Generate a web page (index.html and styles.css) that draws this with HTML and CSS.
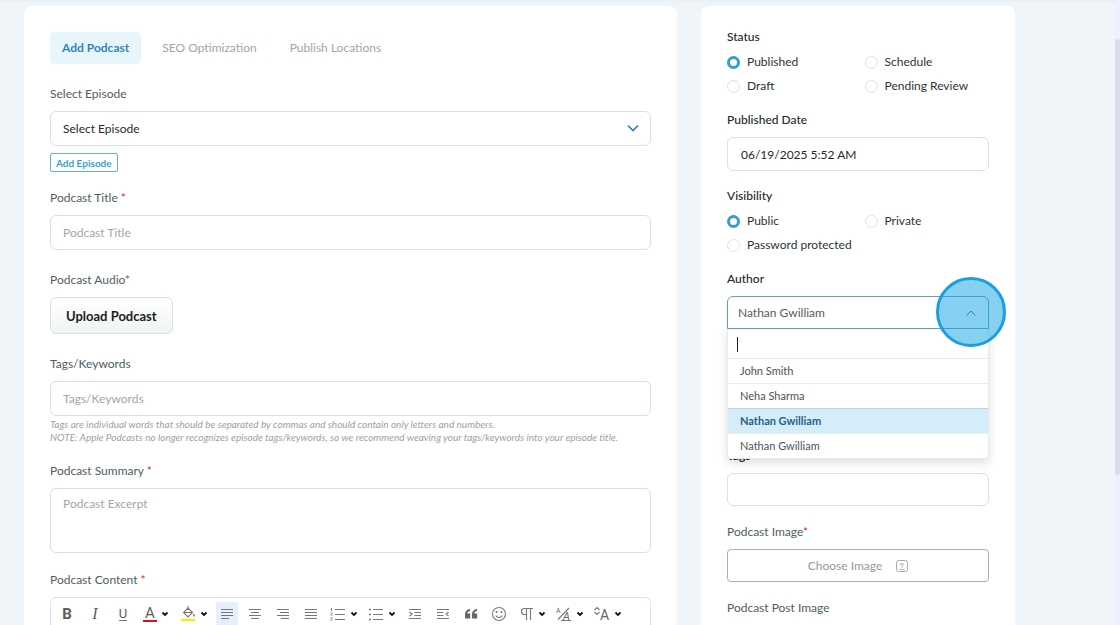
FILE: index.html
```
<!DOCTYPE html>
<html lang="en">
<head>
  <meta charset="UTF-8" />
  <meta name="viewport" content="width=device-width, initial-scale=1.0"/>
  <title>Add Podcast</title>
  <link rel="stylesheet" href="styles.css">
</head>
<body>
  <div class="page">
    <main class="card">
      <nav class="tabs">
        <button class="tab active" type="button">Add Podcast</button>
        <button class="tab" type="button">SEO Optimization</button>
        <button class="tab" type="button">Publish Locations</button>
      </nav>

      <div class="field episode-field">
        <label for="episode">Select Episode</label>
        <div class="select-wrap">
          <select class="control" id="episode">
            <option>Select Episode</option>
          </select>
          <svg class="chevron" width="12" height="8" viewBox="0 0 12 8"><path d="M1 1.5l5 5 5-5" fill="none" stroke="#2f80b5" stroke-width="1.6"/></svg>
        </div>
        <button class="add-episode" type="button">Add Episode</button>
      </div>

      <div class="field title-field">
        <label for="title">Podcast Title <span class="req">*</span></label>
        <input class="control" type="text" id="title" placeholder="Podcast Title" />
      </div>

      <div class="field title-field">
        <label for="upload">Podcast Audio<span class="req">*</span></label>
        <button class="upload" type="button" id="upload">Upload Podcast</button>
      </div>

      <div class="field">
        <label for="keywords">Tags/Keywords</label>
        <input class="control" type="text" id="keywords" placeholder="Tags/Keywords" />
        <p class="hint">Tags are individual words that should be separated by commas and should contain only letters and numbers.<br>NOTE: Apple Podcasts no longer recognizes episode tags/keywords, so we recommend weaving your tags/keywords into your episode title.</p>
      </div>

      <div class="field">
        <label for="summary">Podcast Summary <span class="req">*</span></label>
        <textarea class="control" id="summary" placeholder="Podcast Excerpt"></textarea>
      </div>

      <div class="field">
        <label for="content">Podcast Content <span class="req">*</span></label>
        <div class="editor">
          <div class="toolbar">
            <button class="tool" type="button" aria-label="Bold"><b>B</b></button>
            <button class="tool" type="button" aria-label="Italic"><i class="serif">I</i></button>
            <button class="tool" type="button" aria-label="Underline"><span class="underline">U</span></button>
            <button class="tool drop" type="button" aria-label="Text color">
              <span class="text-color">A</span>
              <svg class="caret" viewBox="0 0 8 6"><path d="M1.5 1.5L4 4l2.5-2.5"/></svg>
            </button>
            <button class="tool drop" type="button" aria-label="Fill color">
              <svg class="icon" viewBox="0 0 16 16"><path d="M8 0v4M8 2l4.500 4.500L8 11 3.500 6.500z"/><path d="M3.500 6.500h9"/><path d="M14 8v2.500" stroke-width="1.500"/><path d="M1 14h14" stroke="#f2ea1a" stroke-width="2.500"/></svg>
              <svg class="caret" viewBox="0 0 8 6"><path d="M1.5 1.5L4 4l2.5-2.5"/></svg>
            </button>
            <button class="tool active" type="button" aria-label="Align left"><svg class="icon" viewBox="0 0 16 16"><path d="M2 3.500h12M2 6.500h12M2 9.500h12M2 12.500h8"/></svg></button>
            <button class="tool" type="button" aria-label="Align center"><svg class="icon" viewBox="0 0 16 16"><path d="M2 3.500h12M4 6.500h8M2 9.500h12M4 12.500h8"/></svg></button>
            <button class="tool" type="button" aria-label="Align right"><svg class="icon" viewBox="0 0 16 16"><path d="M2 3.500h12M5 6.500h9M2 9.500h12M6 12.500h8"/></svg></button>
            <button class="tool" type="button" aria-label="Justify"><svg class="icon" viewBox="0 0 16 16"><path d="M2 3.500h12M2 6.500h12M2 9.500h12M2 12.500h12"/></svg></button>
            <button class="tool drop" type="button" aria-label="Numbered list">
              <svg class="icon" viewBox="0 0 16 16"><path d="M5 3.500h10M5 8.500h10M5 13.500h10"/><path d="M1.500 2v3M.5 7h2M.5 9h2M.5 12h2M.5 14h2" stroke-width="1"/></svg>
              <svg class="caret" viewBox="0 0 8 6"><path d="M1.5 1.5L4 4l2.5-2.5"/></svg>
            </button>
            <button class="tool drop" type="button" aria-label="Bulleted list">
              <svg class="icon" viewBox="0 0 16 16"><path d="M5 3.500h10M5 8.500h10M5 13.500h10"/><path d="M1 3.500h2M1 8.500h2M1 13.500h2" stroke-width="1.500"/></svg>
              <svg class="caret" viewBox="0 0 8 6"><path d="M1.5 1.5L4 4l2.5-2.5"/></svg>
            </button>
            <button class="tool" type="button" aria-label="Indent"><svg class="icon" viewBox="0 0 16 16"><path d="M2 3.500h12M7.500 6.500H14M7.500 9.500H14M2 12.500h12M2.500 6L5 8l-2.500 2"/></svg></button>
            <button class="tool" type="button" aria-label="Outdent"><svg class="icon" viewBox="0 0 16 16"><path d="M2 3.500h12M2 6.500h6.500M2 9.500h6.500M2 12.500h12M13.500 6L11 8l2.500 2"/></svg></button>
            <button class="tool" type="button" aria-label="Quote"><svg class="icon" viewBox="0 0 16 16"><path d="M7 3C3.500 3.300 2 5.800 2 9v3.500h5.200V7.500H4.300C4.500 6.200 5.400 5.200 7 5zM14 3c-3.500.3-5 2.800-5 6v3.500h5.200v-5h-2.900c.2-1.300 1.100-2.300 2.700-2.500z" fill="#666" stroke="none"/></svg></button>
            <button class="tool" type="button" aria-label="Emoji"><svg class="icon" viewBox="0 0 16 16"><circle cx="8" cy="8" r="6.500"/><path d="M4.800 9.500c1.200 2.600 5.200 2.600 6.400 0"/><path d="M5.500 5v2M10.500 5v2" stroke-width="1.500"/></svg></button>
            <button class="tool drop" type="button" aria-label="Paragraph format">
              <svg class="icon" viewBox="0 0 16 16"><path d="M15 2.500H6.500a3 3 0 0 0 0 6h2M8.500 2.500V14M12.500 2.500V14"/></svg>
              <svg class="caret" viewBox="0 0 8 6"><path d="M1.5 1.5L4 4l2.5-2.5"/></svg>
            </button>
            <button class="tool drop" type="button" aria-label="Inline style">
              <svg class="icon" viewBox="0 0 16 16"><text x="0" y="7" font-size="7">A</text><text x="7" y="14" font-size="11" font-style="italic">A</text><path d="M2 13.500L13 2M5 14.500h10"/></svg>
              <svg class="caret" viewBox="0 0 8 6"><path d="M1.5 1.5L4 4l2.5-2.5"/></svg>
            </button>
            <button class="tool drop" type="button" aria-label="Font size">
              <svg class="icon" viewBox="0 0 16 16"><path d="M.5 4L3 1.500 5.500 4M.5 6L3 8.500 5.500 6"/><text x="6" y="14" font-size="14">A</text></svg>
              <svg class="caret" viewBox="0 0 8 6"><path d="M1.5 1.5L4 4l2.5-2.5"/></svg>
            </button>
          </div>
          <textarea class="editor-body" id="content"></textarea>
        </div>
      </div>
    </main>

    <aside class="card">
      <fieldset class="group">
        <legend>Status</legend>
        <div class="radios">
          <label><input type="radio" name="status" checked />Published</label>
          <label><input type="radio" name="status" />Schedule</label>
          <label><input type="radio" name="status" />Draft</label>
          <label><input type="radio" name="status" />Pending Review</label>
        </div>
      </fieldset>

      <div class="group">
        <label class="strong" for="date">Published Date</label>
        <input class="control date" type="text" id="date" value="06/19/2025 5:52 AM" />
      </div>

      <fieldset class="group">
        <legend>Visibility</legend>
        <div class="radios">
          <label><input type="radio" name="visibility" checked />Public</label>
          <label><input type="radio" name="visibility" />Private</label>
          <label class="wide"><input type="radio" name="visibility" />Password protected</label>
        </div>
      </fieldset>

      <div class="group author-group">
        <label class="strong" for="author">Author</label>
        <div class="select-wrap">
          <select class="control author" id="author">
            <option>John Smith</option>
            <option>Neha Sharma</option>
            <option selected>Nathan Gwilliam</option>
          </select>
          <svg class="chevron" width="12" height="8" viewBox="0 0 12 8"><path d="M1.500 6.500L6 2l4.500 4.500" fill="none" stroke="#35637c" stroke-width="1"/></svg>
          <div class="dropdown">
            <input class="search" type="text" aria-label="Search authors" />
            <ul role="listbox" aria-label="Authors">
              <li role="option">John Smith</li>
              <li role="option">Neha Sharma</li>
              <li role="option" aria-selected="true" class="selected">Nathan Gwilliam</li>
              <li role="option">Nathan Gwilliam</li>
            </ul>
          </div>
          <span class="click-marker"></span>
        </div>
      </div>

      <div class="field">
        <label class="strong tags-label" for="tags">Tags</label>
        <input class="control short" type="text" id="tags" />
      </div>

      <div class="field">
        <label for="image">Podcast Image<span class="req">*</span></label>
        <button class="choose" type="button" id="image">Choose Image
          <svg width="12" height="12" viewBox="0 0 12 12" fill="none" stroke="#aaa"><rect x=".5" y=".5" width="11" height="11" rx="2"/><path d="M6 8V3M4 5l2-2 2 2M3 9.500h6" stroke-width=".8"/></svg>
        </button>
      </div>

      <div class="field">
        <label for="post-image">Podcast Post Image</label>
        <input type="file" id="post-image" hidden />
      </div>
    </aside>
  </div>
  <div class="scrollbar"><div class="thumb"></div></div>
</body>
</html>
```
FILE: styles.css
```
* {
  box-sizing: border-box;
}

body {
  display: flex;
  height: 100vh;
  margin: 0;
  overflow: hidden;
  background: #f0f5f9;
  color: #2c3437;
  font-family: Lato, sans-serif;
  font-size: 12px;
  line-height: 18px;
}

button, input, select, textarea {
  font: inherit;
  color: inherit;
  margin: 0;
}

button {
  cursor: pointer;
}

.page {
  flex: 1;
  display: grid;
  grid-template-columns: 1fr 314px;
  gap: 24px;
  padding: 6px 100px 0 24px;
  box-shadow: inset 0 3px 2px -1px #e8f0f4;
}

.card {
  background: #fff;
  border-radius: 8px;
  padding: 26px;
  min-width: 0;
}

aside.card {
  padding-top: 22px;
}

.tabs {
  display: flex;
  gap: 9px;
  margin-bottom: 21px;
}

.tab {
  height: 32px;
  padding: 0 12px;
  border: none;
  border-radius: 4px;
  background: none;
  color: #a3a5a7;
}

.tab.active {
  background: #e8f6fc;
  color: #2d86bd;
  font-weight: bold;
}

.field {
  margin-bottom: 18px;
}

.episode-field {
  margin-bottom: 17px;
}

.title-field {
  margin-bottom: 21px;
}

aside .field {
  margin-bottom: 17px;
}

.field > label, .strong {
  display: block;
  margin-bottom: 8px;
  color: #4f5d62;
}

.req {
  color: #e02b2b;
}

.control {
  display: block;
  width: 100%;
  height: 35px;
  padding: 0 12px;
  border: 1px solid #d9e1e4;
  border-radius: 6px;
  background: #fff;
  color: #24292b;
  outline: none;
}

.control::placeholder {
  color: #9da8ad;
}

select.control {
  appearance: none;
}

textarea.control {
  height: 65px;
  padding-top: 6px;
  resize: none;
}

.select-wrap {
  position: relative;
}

.chevron {
  position: absolute;
  right: 12px;
  top: 13px;
}

.add-episode {
  display: block;
  height: 19px;
  margin-top: 7px;
  padding: 0 5px;
  border: 1px solid #5fb4d3;
  border-radius: 2px;
  background: #fff;
  color: #35a3cc;
  font-size: 10px;
  font-weight: bold;
  line-height: 16px;
}

.upload {
  display: block;
  height: 37px;
  padding: 0 15px;
  border: 1px solid #d9e1e4;
  border-radius: 6px;
  background: linear-gradient(#fff, #f1f4f4);
  color: #1c2022;
  font-size: 13px;
  font-weight: bold;
}

.hint {
  margin: 2px 0 0;
  color: #a0a0a0;
  font-size: 10px;
  font-style: italic;
  line-height: 13px;
}

/* editor */
.editor {
  border: 1px solid #dfe2e4;
  border-radius: 6px;
}

.toolbar {
  display: flex;
  gap: 6px;
  padding: 4px 5px;
}

.tool {
  display: flex;
  align-items: center;
  justify-content: center;
  width: 22px;
  height: 24px;
  padding: 0;
  border: none;
  background: none;
  color: #5c5c5c;
  font-family: Roboto, sans-serif;
  font-size: 15px;
  line-height: 16px;
}

.tool.drop {
  width: 32px;
  gap: 4px;
}

.tool.active {
  background: #e6effc;
}

.serif {
  font-family: "Liberation Serif", serif;
  font-size: 16px;
}

.underline {
  border-bottom: 1px solid #777;
  font-size: 13px;
  line-height: 13px;
}

.text-color {
  width: 14px;
  border-bottom: 2px solid #cc1818;
  line-height: 13px;
}

.icon {
  flex: none;
  width: 16px;
  height: 16px;
  fill: none;
  stroke: #777;
  stroke-width: 1.1;
}

.icon text {
  fill: #666;
  stroke: none;
}

.caret {
  flex: none;
  width: 8px;
  height: 6px;
  fill: none;
  stroke: #111;
  stroke-width: 1.8;
}

.editor-body {
  display: block;
  width: 100%;
  height: 120px;
  border: none;
  background: none;
  resize: none;
}

/* sidebar */
.group {
  margin: 0 0 16px;
  padding: 0;
  border: none;
}

.group legend, .strong, .field > .strong {
  padding: 0;
  color: #22292c;
  font-weight: 500;
}

.field > .tags-label {
  font-weight: bold;
}

.radios {
  display: grid;
  grid-template-columns: 1fr 1fr;
  gap: 6px 13px;
  padding-top: 7px;
}

.radios label {
  display: flex;
  align-items: center;
  gap: 7px;
}

.radios .wide {
  grid-column: 1 / 3;
}

.radios input {
  appearance: none;
  width: 13px;
  height: 13px;
  border: 1px solid #dbe3e6;
  border-radius: 50%;
  background: #fff;
}

.radios input:checked {
  border: 3px solid #319fcc;
}

.control.date {
  height: 34px;
  padding: 0 13px;
}

/* keeps the fields below clear of the open list */
.author-group {
  margin-bottom: 118px;
}

.control.author {
  height: 33px;
  padding: 0 10px;
  border-color: #5aa5b9;
  border-radius: 6px 6px 0 0;
  color: #555d61;
}

.dropdown {
  position: absolute;
  z-index: 1;
  top: 100%;
  left: 0;
  right: 0;
  border: 1px solid #e6ebed;
  border-top: none;
  border-radius: 0 0 4px 4px;
  background: #fff;
  box-shadow: 0 4px 10px rgba(0, 0, 0, 0.13);
}

/* the bar on the left is the text cursor */
.search {
  display: block;
  width: 100%;
  height: 29px;
  border: none;
  outline: none;
  background: linear-gradient(#222, #222) 9px 8px / 1px 15px no-repeat;
}

.dropdown ul {
  margin: 0;
  padding: 0;
  list-style: none;
}

.dropdown li {
  height: 25px;
  padding: 0 12px;
  border-top: 1px solid #e6ebed;
  color: #4b5356;
  font-size: 11px;
  line-height: 24px;
}

.dropdown .selected {
  border-color: #b4d5e2;
  background: #d4edf9;
  color: #245f8a;
  font-weight: bold;
}

.click-marker {
  position: absolute;
  z-index: 2;
  top: -19px;
  right: -17px;
  width: 70px;
  height: 70px;
  border: 3px solid #1b9fdc;
  border-radius: 50%;
  background: rgba(14, 163, 230, 0.5);
}

.control.short {
  height: 33px;
}

.choose {
  display: flex;
  align-items: center;
  justify-content: center;
  gap: 14px;
  width: 100%;
  height: 33px;
  border: 1px solid #a9adb3;
  border-radius: 4px;
  background: #fff;
  color: #989898;
}

.scrollbar {
  width: 5px;
  padding-top: 39px;
  background: #eff0fb;
}

.thumb {
  height: 436px;
  border-radius: 3px;
  background: #dcddec;
}
```
